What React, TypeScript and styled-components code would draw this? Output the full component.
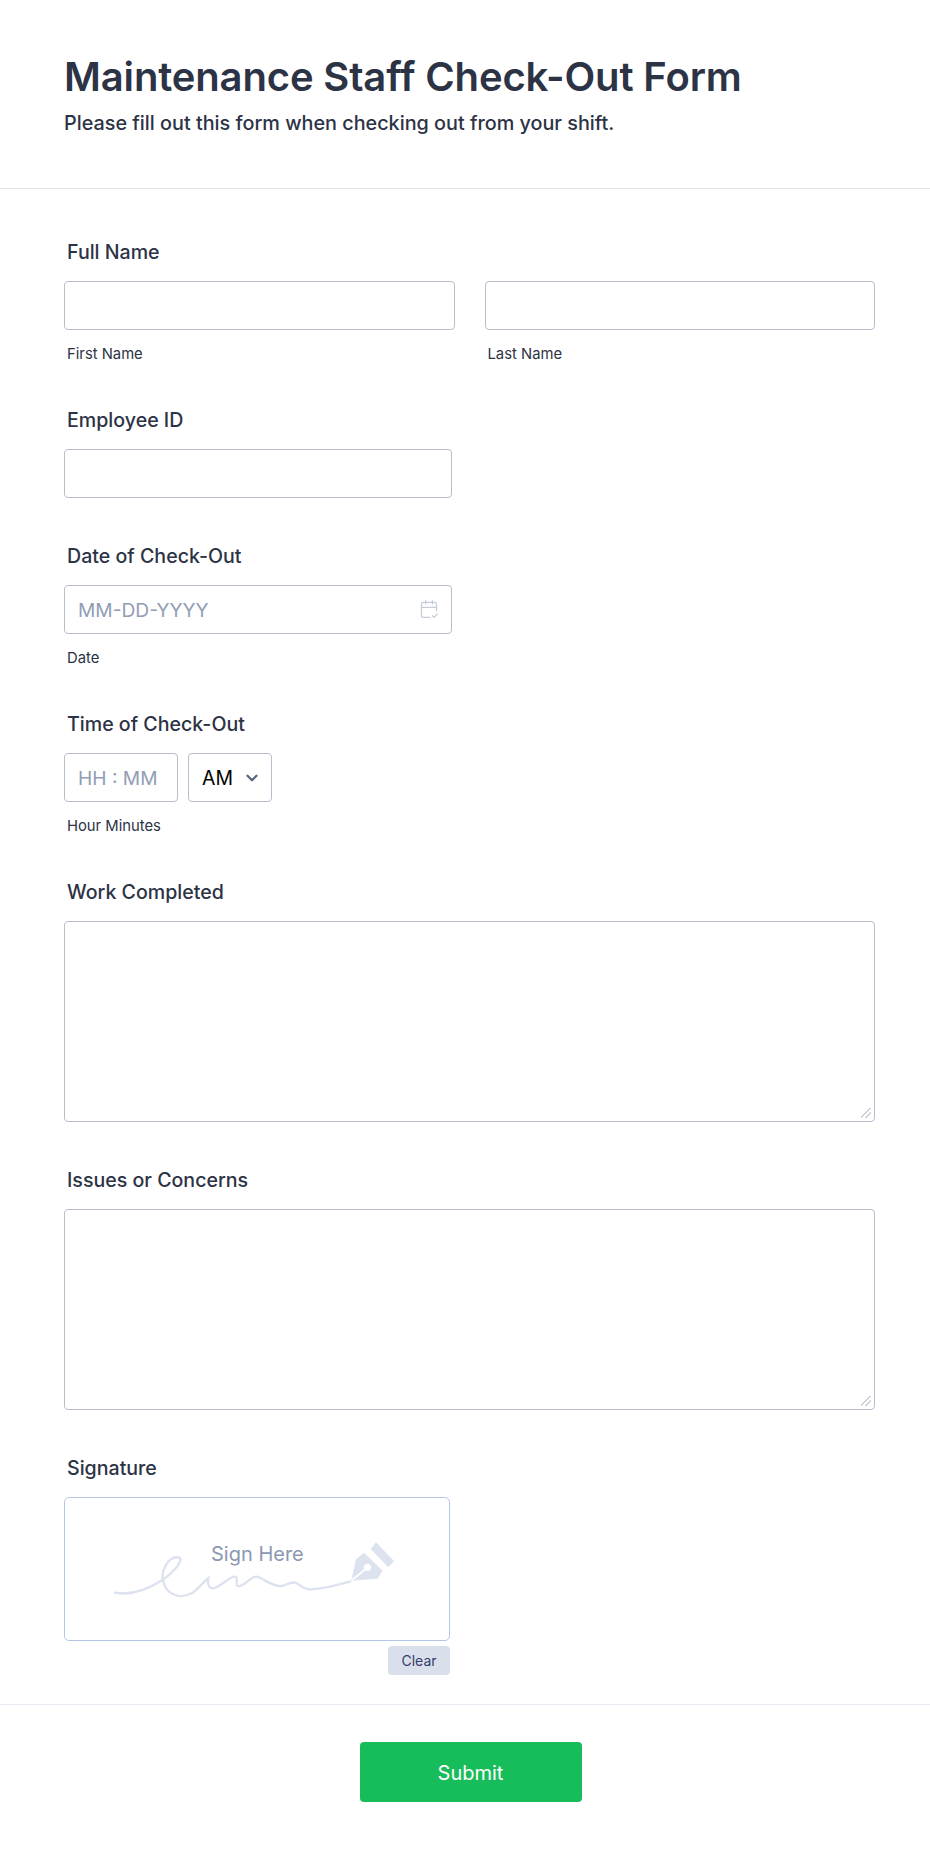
import React from 'react';
import styled, { createGlobalStyle } from 'styled-components';
import { CalendarCheck2, ChevronDown } from 'lucide-react';

const GlobalStyle = createGlobalStyle`
    html, body {
        margin: 0;
        padding: 0;
        background: #ffffff;
    }
    * {
        box-sizing: border-box;
    }
    body {
        font-family: Inter, "Liberation Sans", sans-serif;
        font-variant-ligatures: none;
        color: #2c3345;
    }
`;

const Page = styled.main`
    width: 930px;
    height: 1851px;
    background: #ffffff;
`;

const Header = styled.header`
    height: 189px;
    padding: 52px 64px 0;
    border-bottom: 1px solid #dfe2ea;
`;

const Title = styled.h1`
    margin: 0;
    font-size: 40px;
    line-height: 50px;
    font-weight: 600;
    letter-spacing: -0.15px;
    color: #2c3345;
`;

const Subtitle = styled.p`
    margin: 9px 0 0;
    font-size: 19.8px;
    line-height: 24px;
    font-weight: 500;
    color: #2c3345;
`;

const Fields = styled.form`
    display: flex;
    flex-direction: column;
    gap: 47px;
    padding: 52px 55px 0 64px;
`;

const Field = styled.div`
    display: flex;
    flex-direction: column;
`;

const Label = styled.label`
    display: block;
    margin: 0 0 18px 3px;
    font-size: 19.6px;
    line-height: 22px;
    font-weight: 500;
    color: #2c3345;
`;

const Row = styled.div<{ $gap: number }>`
    display: flex;
    gap: ${(p) => p.$gap}px;
`;

const Column = styled.div`
    flex: 1;
    display: flex;
    flex-direction: column;
`;

const Input = styled.input<{ $width?: number }>`
    display: block;
    width: ${(p) => (p.$width ? `${p.$width}px` : '100%')};
    height: 49px;
    padding: 0 13px;
    border: 1px solid #b8bdc9;
    border-radius: 4px;
    background: #ffffff;
    font-family: inherit;
    font-size: 19.2px;
    color: #2c3345;
    &::placeholder {
        color: #919db4;
        opacity: 1;
    }
`;

const Sublabel = styled.span`
    display: block;
    margin: 16px 0 0 3px;
    font-size: 14.8px;
    line-height: 16px;
    color: #2c3345;
`;

const DateBox = styled.div`
    position: relative;
    width: 388px;
    svg {
        position: absolute;
        top: 14px;
        right: 13px;
        color: #c5cbd8;
    }
`;

const SelectBox = styled.div`
    position: relative;
    width: 84px;
    height: 49px;
    svg {
        position: absolute;
        top: 16px;
        right: 11px;
        color: #57647e;
    }
`;

const Select = styled.select`
    width: 100%;
    height: 100%;
    padding: 0 0 0 13px;
    appearance: none;
    border: 1px solid #b8bdc9;
    border-radius: 4px;
    background: #ffffff;
    font-family: inherit;
    font-size: 19.4px;
    color: #000000;
`;

const TextArea = styled.textarea`
    display: block;
    width: 100%;
    height: 201px;
    border: 1px solid #b8bdc9;
    border-radius: 4px;
    background: #ffffff;
    font-family: inherit;
    font-size: 16px;
    &::-webkit-resizer {
        background-image:
            linear-gradient(135deg, transparent 44%, #c9ced9 44%, #c9ced9 54%, transparent 54%),
            linear-gradient(135deg, transparent 68%, #c9ced9 68%, #c9ced9 78%, transparent 78%);
        background-size: 10px 10px;
        background-position: 2px 2px;
        background-repeat: no-repeat;
    }
`;

const SignatureBox = styled.div`
    position: relative;
    width: 386px;
    height: 144px;
    border: 1px solid #b4c6e6;
    border-radius: 5px;
    background: #ffffff;
`;

const SignatureArt = styled.svg`
    position: absolute;
    left: 35px;
    top: 32px;
`;

const SignHere = styled.span`
    position: absolute;
    left: 146px;
    top: 44px;
    font-size: 20px;
    line-height: 24px;
    color: #8c97b2;
`;

const ClearRow = styled.div`
    display: flex;
    justify-content: flex-end;
    width: 386px;
    margin-top: 5px;
`;

const ClearButton = styled.button`
    width: 62px;
    height: 29px;
    padding: 0;
    border: 0;
    border-radius: 4px;
    background: #dadfec;
    font-family: inherit;
    font-size: 14px;
    color: #343c6a;
`;

const Footer = styled.footer`
    display: flex;
    justify-content: center;
    margin-top: 29px;
    padding: 37px 0 0 11px;
    border-top: 1px solid #eaebf2;
`;

const SubmitButton = styled.button`
    width: 222px;
    height: 60px;
    padding: 2px 0 0;
    border: 0;
    border-radius: 4px;
    background: #18bd5b;
    font-family: inherit;
    font-size: 20px;
    font-weight: 400;
    color: #ffffff;
`;

const SignatureDrawing = () => (
    <SignatureArt width="300" height="100" viewBox="0 0 900 300" fill="none">
        <path
            d="M45 188 C95 198 140 180 187 150 C225 125 255 85 235 82 C205 78 180 125 190 155 C200 195 240 208 275 190 C295 178 310 155 325 145 C322 155 325 178 340 175 C365 170 385 140 405 140 C420 142 398 172 420 168 C440 162 455 138 470 140 C490 145 520 172 545 168 C560 165 570 155 585 158 C600 162 610 180 635 178 C680 176 720 162 750 155"
            stroke="#dde2ef"
            strokeWidth="7"
            strokeLinecap="round"
        />
        <path d="M828 37 L882 93 L865 112 L812 57 Z" fill="#dde2ef" />
        <path d="M792 68 L848 122 L832 146 L754 152 L768 88 Z" fill="#dde2ef" />
        <circle cx="802" cy="112" r="11" fill="#ffffff" />
        <path d="M756 150 L796 118" stroke="#ffffff" strokeWidth="5" />
    </SignatureArt>
);

export default function App() {
    return (
        <Page>
            <GlobalStyle />
            <Header>
                <Title>Maintenance Staff Check-Out Form</Title>
                <Subtitle>Please fill out this form when checking out from your shift.</Subtitle>
            </Header>
            <Fields>
                <Field>
                    <Label>Full Name</Label>
                    <Row $gap={30}>
                        <Column>
                            <Input />
                            <Sublabel>First Name</Sublabel>
                        </Column>
                        <Column>
                            <Input />
                            <Sublabel>Last Name</Sublabel>
                        </Column>
                    </Row>
                </Field>
                <Field>
                    <Label>Employee ID</Label>
                    <Input $width={388} />
                </Field>
                <Field>
                    <Label>Date of Check-Out</Label>
                    <DateBox>
                        <Input placeholder="MM-DD-YYYY" />
                        <CalendarCheck2 size={20} strokeWidth={1.5} />
                    </DateBox>
                    <Sublabel>Date</Sublabel>
                </Field>
                <Field>
                    <Label>Time of Check-Out</Label>
                    <Row $gap={10}>
                        <Input $width={114} placeholder="HH : MM" />
                        <SelectBox>
                            <Select defaultValue="AM">
                                <option>AM</option>
                                <option>PM</option>
                            </Select>
                            <ChevronDown size={18} strokeWidth={3} />
                        </SelectBox>
                    </Row>
                    <Sublabel>Hour Minutes</Sublabel>
                </Field>
                <Field>
                    <Label>Work Completed</Label>
                    <TextArea />
                </Field>
                <Field>
                    <Label>Issues or Concerns</Label>
                    <TextArea />
                </Field>
                <Field>
                    <Label>Signature</Label>
                    <SignatureBox>
                        <SignatureDrawing />
                        <SignHere>Sign Here</SignHere>
                    </SignatureBox>
                    <ClearRow>
                        <ClearButton type="button">Clear</ClearButton>
                    </ClearRow>
                </Field>
            </Fields>
            <Footer>
                <SubmitButton type="button">Submit</SubmitButton>
            </Footer>
        </Page>
    );
}
